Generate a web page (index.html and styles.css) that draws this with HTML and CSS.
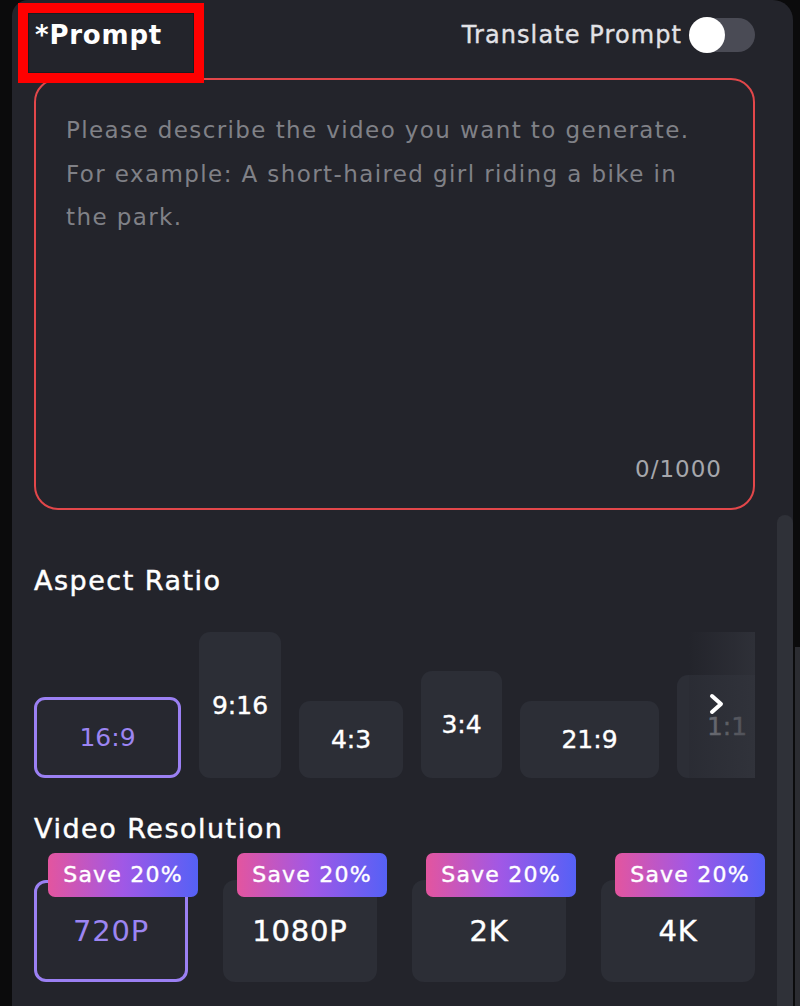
FILE: index.html
```html
<!DOCTYPE html>
<html lang="en">
<head>
  <meta charset="UTF-8" />
  <meta name="viewport" content="width=device-width, initial-scale=1" />
  <title>Video Generator</title>
  <link rel="stylesheet" href="styles.css">
</head>
<body>
  <div class="panel">
    <div class="prompt-head">
      <label class="prompt-label" for="prompt">*Prompt</label>
      <div class="translate">
        <span>Translate Prompt</span>
        <button class="switch" type="button" title="Translate Prompt"><span class="knob"></span></button>
      </div>
    </div>

    <div class="prompt-box">
      <textarea id="prompt" maxlength="1000" placeholder="Please describe the video you want to generate.&#10;For example: A short-haired girl riding a bike in&#10;the park."></textarea>
      <div class="counter">0/1000</div>
    </div>

    <h3 class="section-title ratio-title">Aspect Ratio</h3>
    <div class="ratio-wrap">
      <div class="ratio-list">
        <button class="ratio r-16-9 active">16:9</button>
        <button class="ratio r-9-16">9:16</button>
        <button class="ratio r-4-3">4:3</button>
        <button class="ratio r-3-4">3:4</button>
        <button class="ratio r-21-9">21:9</button>
        <button class="ratio r-1-1">1:1</button>
      </div>
      <div class="ratio-next">
        <svg width="18" height="24" viewBox="0 0 18 24"><polyline points="4,4 13,12 4,20" fill="none" stroke="#fff" stroke-width="4" stroke-linecap="round" stroke-linejoin="round"/></svg>
      </div>
    </div>

    <h3 class="section-title res-title">Video Resolution</h3>
    <div class="res-list">
      <button class="res active"><span class="badge">Save 20%</span>720P</button>
      <button class="res"><span class="badge">Save 20%</span>1080P</button>
      <button class="res"><span class="badge">Save 20%</span>2K</button>
      <button class="res"><span class="badge">Save 20%</span>4K</button>
    </div>

    <div class="scroll-thumb"></div>
  </div>
  <div class="edge-strip"></div>

  <!-- highlight box -->
  <div class="mark"></div>
</body>
</html>
```

FILE: styles.css
```css
body {
  margin: 0;
  background-color: #0b0b0c;
  font-family: "DejaVu Sans", "Noto Sans", Arial, sans-serif;
  color: #fff;
  overflow: hidden;
  height: 1006px;
}
.panel {
  position: relative;
  margin-left: 12px;
  width: 781px;
  height: 1006px;
  box-sizing: border-box;
  padding: 0 38px 0 22px;
  background-color: #23242b;
  border-radius: 16px 20px 0 0;
  overflow: hidden;
}
.prompt-head {
  height: 70px;
  display: flex;
  justify-content: space-between;
  align-items: center;
}
.prompt-label {
  font-size: 26px;
  font-weight: bold;
  letter-spacing: 0.8px;
  margin-left: 1px;
}
.translate {
  display: flex;
  align-items: center;
  gap: 9px;
  font-size: 24px;
  letter-spacing: 1.1px;
  color: #e2e2e6;
  -webkit-text-stroke: 0.35px #e2e2e6;
}
.switch {
  position: relative;
  width: 64px;
  height: 34px;
  border: none;
  border-radius: 17px;
  background-color: #4a4b55;
  padding: 0;
  cursor: pointer;
}
.switch .knob {
  position: absolute;
  left: -2px;
  top: -1px;
  width: 36px;
  height: 36px;
  border-radius: 50%;
  background: #fff;
}
.prompt-box {
  margin-top: 8px;
  height: 432px;
  box-sizing: border-box;
  border: 2px solid #e2474a;
  border-radius: 24px;
  padding: 29px 31px 26px 30px;
  display: flex;
  flex-direction: column;
}
.prompt-box textarea {
  flex: 1;
  background: transparent;
  border: none;
  outline: none;
  resize: none;
  padding: 0;
  font-family: inherit;
  font-size: 23px;
  letter-spacing: 1.4px;
  line-height: 43.5px;
  color: #ddd;
}
.prompt-box textarea::placeholder {
  color: #808187;
}
.counter {
  text-align: right;
  font-size: 23px;
  letter-spacing: 1px;
  color: #a6a7ac;
}
.section-title {
  margin: 0;
  font-size: 27px;
  letter-spacing: 1.5px;
  line-height: 36px;
  font-weight: normal;
  -webkit-text-stroke: 0.45px #fff;
}
.ratio-title {
  margin-top: 53px;
}
.ratio-wrap {
  position: relative;
  margin-top: 33px;
  overflow: hidden;
}
.ratio-list {
  display: flex;
  align-items: flex-end;
  gap: 18px;
}
.ratio {
  flex-shrink: 0;
  border: none;
  border-radius: 11px;
  background-color: #2c2e36;
  color: #fff;
  font-family: inherit;
  font-size: 25px;
  padding: 0;
  cursor: pointer;
  -webkit-text-stroke: 0.4px currentColor;
}
.ratio.active {
  border: 3px solid #9b80f3;
  color: #9c85f2;
  background-color: #272830;
  -webkit-text-stroke: 0;
}
.r-16-9 { width: 147px; height: 81px; }
.r-9-16 { width: 82px; height: 146px; }
.r-4-3 { width: 104px; height: 77px; }
.r-3-4 { width: 81px; height: 107px; }
.r-21-9 { width: 139px; height: 77px; }
.r-1-1 { width: 100px; height: 103px; color: #8d8e94; }
.ratio-next {
  position: absolute;
  right: 0;
  top: 0;
  bottom: 0;
  width: 66px;
  background: linear-gradient(90deg, rgba(35,36,43,0.2), rgba(50,52,60,0.75));
  display: flex;
  justify-content: center;
  padding-top: 60px;
  box-sizing: border-box;
  padding-right: 10px;
}
.res-title {
  margin-top: 33px;
}
.res-list {
  margin-top: 33px;
  display: flex;
  gap: 35px;
}
.res {
  position: relative;
  width: 154px;
  height: 102px;
  border: none;
  border-radius: 12px;
  background-color: #2c2e36;
  color: #fff;
  font-family: inherit;
  font-size: 29px;
  letter-spacing: 0.8px;
  padding: 0;
  cursor: pointer;
  -webkit-text-stroke: 0.4px currentColor;
}
.res.active {
  border: 3px solid #9b80f3;
  color: #9c85f2;
  background-color: #272830;
  -webkit-text-stroke: 0;
}
.badge {
  position: absolute;
  left: 14px;
  top: -27px;
  width: 150px;
  height: 44px;
  border-radius: 7px;
  background: linear-gradient(90deg, #e3559f, #a058e6 50%, #5561f6);
  color: #fff;
  font-size: 22px;
  letter-spacing: 1.2px;
  line-height: 44px;
  text-align: center;
  -webkit-text-stroke: 0.4px #fff;
}
.res.active .badge {
  left: 11px;
  top: -30px;
}
.scroll-thumb {
  position: absolute;
  right: 0;
  top: 515px;
  bottom: 0;
  width: 16px;
  border-radius: 8px 8px 0 0;
  background-color: #2f3138;
}
.edge-strip {
  position: absolute;
  left: 795px;
  top: 647px;
  width: 5px;
  height: 359px;
  background-color: #2b2c31;
}
.mark {
  position: absolute;
  left: 18px;
  top: 3px;
  width: 166px;
  height: 60px;
  border: 10px solid #ff0000;
  box-shadow: inset 0 0 0 1px #1a1b20;
}
```
